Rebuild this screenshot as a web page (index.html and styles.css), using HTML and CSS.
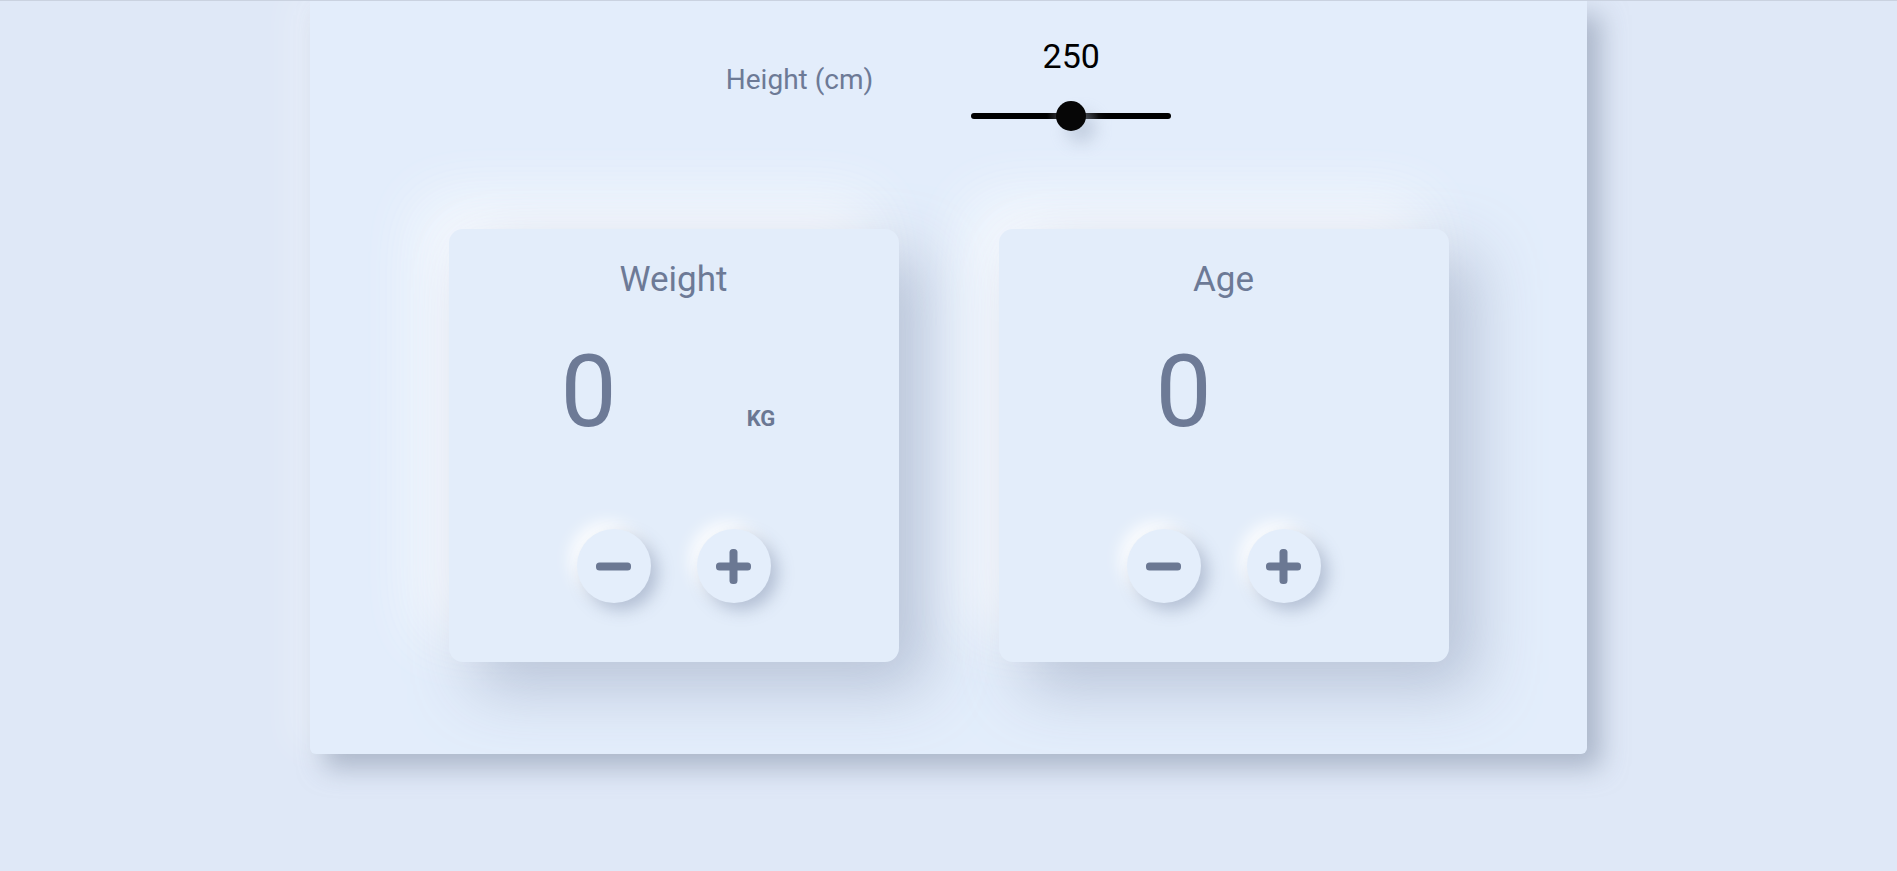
FILE: index.html
```html
<!DOCTYPE html>
<html lang="en">
<head>
<meta charset="utf-8">
<title>BMI Calculator</title>
<link rel="stylesheet" href="styles.css">
</head>
<body>
<main class="panel">
  <section class="height-row">
    <span class="height-label">Height (cm)</span>
    <div class="slider-col">
      <span class="height-value">250</span>
      <div class="slider">
        <div class="track"></div>
        <div class="thumb"></div>
      </div>
    </div>
  </section>
  <section class="cards">
    <div class="card card--weight">
      <h2 class="card-title">Weight</h2>
      <div class="value-row">
        <span class="num">0</span>
        <span class="unit">KG</span>
      </div>
      <div class="btn-row">
        <button class="round-btn" aria-label="decrease">
          <svg width="35" height="35" viewBox="0 0 35 35"><rect x="0" y="13.5" width="35" height="8" rx="3.5" fill="#6b7893"/></svg>
        </button>
        <button class="round-btn" aria-label="increase">
          <svg width="35" height="35" viewBox="0 0 35 35"><rect x="0" y="13.5" width="35" height="8" rx="3.5" fill="#6b7893"/><rect x="13.5" y="0" width="8" height="35" rx="3.5" fill="#6b7893"/></svg>
        </button>
      </div>
    </div>
    <div class="card card--age">
      <h2 class="card-title">Age</h2>
      <div class="value-row">
        <span class="num">0</span>
      </div>
      <div class="btn-row">
        <button class="round-btn" aria-label="decrease">
          <svg width="35" height="35" viewBox="0 0 35 35"><rect x="0" y="13.5" width="35" height="8" rx="3.5" fill="#6b7893"/></svg>
        </button>
        <button class="round-btn" aria-label="increase">
          <svg width="35" height="35" viewBox="0 0 35 35"><rect x="0" y="13.5" width="35" height="8" rx="3.5" fill="#6b7893"/><rect x="13.5" y="0" width="8" height="35" rx="3.5" fill="#6b7893"/></svg>
        </button>
      </div>
    </div>
  </section>
</main>
</body>
</html>
```
FILE: styles.css
```css
* { box-sizing: border-box; }

html, body {
  margin: 0;
  padding: 0;
}

body {
  background: #dfe8f7;
  border-top: 1px solid #cad2e0;
  font-family: Roboto, "Liberation Sans", sans-serif;
  color: #6d7a96;
  height: 871px;
  overflow: hidden;
}

.panel {
  width: 1277px;
  height: 753px;
  margin: 0 auto;
  background: #e3edfb;
  border-radius: 0 0 6px 6px;
  box-shadow: 14px 14px 26px rgba(145, 156, 178, 0.65), -18px -6px 36px rgba(255, 255, 255, 0.28);
  padding-top: 36px;
}

.height-row {
  display: flex;
  justify-content: center;
  align-items: flex-start;
  gap: 98px;
}

.height-label {
  font-size: 28px;
  line-height: 33px;
  margin-top: 26px;
  color: #6d7a96;
}

.slider-col {
  display: flex;
  flex-direction: column;
  align-items: center;
  width: 200px;
}

.height-value {
  font-size: 34px;
  line-height: 40px;
  margin-top: -1px;
  color: #000;
}

.slider {
  position: relative;
  width: 200px;
  height: 30px;
  margin-top: 25px;
  display: flex;
  align-items: center;
}

.track {
  width: 100%;
  height: 6px;
  border-radius: 3px;
  background: linear-gradient(90deg, #000 0%, #000 38%, #3a3c40 45%, #000 50%, #2e3033 56%, #000 64%, #000 100%);
}

.thumb {
  position: absolute;
  left: 85px;
  top: 0;
  width: 30px;
  height: 30px;
  border-radius: 50%;
  background: #060606;
  box-shadow: 10px 12px 16px rgba(160, 172, 196, 0.45);
}

.cards {
  display: flex;
  justify-content: center;
  gap: 100px;
  margin-top: 98px;
}

.card {
  width: 450px;
  height: 433px;
  border-radius: 14px;
  background: #e3edfa;
  box-shadow: 26px 26px 62px rgba(170, 182, 204, 0.75), -26px -26px 62px rgba(252, 253, 255, 0.9);
  padding-top: 30px;
  display: flex;
  flex-direction: column;
}

.card-title {
  margin: 0;
  font-weight: 400;
  font-size: 35px;
  line-height: 41px;
  text-align: center;
  color: #6d7a96;
}

.value-row {
  display: flex;
  align-items: baseline;
  margin-top: 42px;
  height: 100px;
}

.num {
  font-size: 100px;
  line-height: 100px;
  color: #6d7a96;
  margin-left: 112px;
}

.card--age .num {
  margin-left: 157px;
}

.unit {
  font-size: 22px;
  font-weight: 700;
  color: #6b7893;
  margin-left: 130px;
}

.btn-row {
  display: flex;
  justify-content: center;
  gap: 46px;
  margin-top: 87px;
}

.round-btn {
  width: 74px;
  height: 74px;
  border: none;
  border-radius: 50%;
  background: #e4eefb;
  padding: 0;
  display: flex;
  align-items: center;
  justify-content: center;
  box-shadow: 7px 7px 16px rgba(168, 180, 202, 0.8), -7px -7px 16px rgba(255, 255, 255, 0.95);
}

.round-btn svg {
  display: block;
}
```
